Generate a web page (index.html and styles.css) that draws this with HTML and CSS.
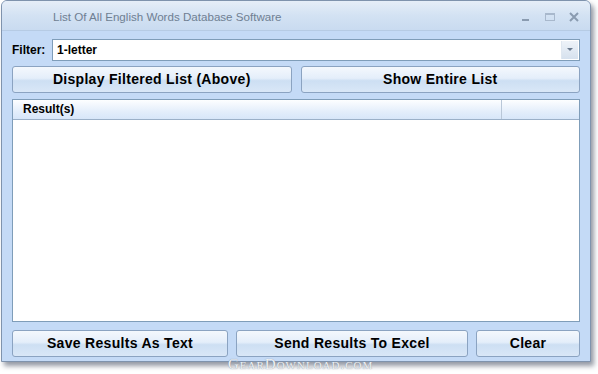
FILE: index.html
```html
<!DOCTYPE html>
<html lang="en">
<head>
    <meta charset="UTF-8">
    <title>List Of All English Words Database Software</title>
    <link rel="stylesheet" href="styles.css">
</head>
<body>
<div class="window">
    <div class="titlebar">
        <span class="title">List Of All English Words Database Software</span>
        <div class="controls">
            <svg width="12" height="10" viewBox="0 0 12 10"><rect x="2" y="7" width="7" height="2" fill="#8a9bb0"/></svg>
            <svg width="12" height="10" viewBox="0 0 12 10"><rect x="1.5" y="1.5" width="9" height="7" fill="none" stroke="#a8b8cc"/><rect x="1" y="1" width="10" height="2" fill="#a8b8cc"/></svg>
            <svg width="12" height="10" viewBox="0 0 12 10"><path d="M2 1 L10 9 M10 1 L2 9" stroke="#8a9bb0" stroke-width="2"/></svg>
        </div>
    </div>

    <div class="content">
        <div class="filter-row">
            <label>Filter:</label>
            <div class="combo">
                <span>1-letter</span>
                <div class="arrow">
                    <svg width="6" height="4" viewBox="0 0 6 4"><path d="M0 0 H6 L3 3 Z" fill="#6b7b8f"/></svg>
                </div>
            </div>
        </div>

        <div class="btn-row top">
            <button class="btn">Display Filtered List (Above)</button>
            <button class="btn">Show Entire List</button>
        </div>

        <div class="list">
            <div class="list-head">
                <div class="col first">Result(s)</div>
                <div class="col"></div>
            </div>
            <div class="list-body"></div>
        </div>

        <div class="btn-row bottom">
            <button class="btn">Save Results As Text</button>
            <button class="btn">Send Results To Excel</button>
            <button class="btn">Clear</button>
        </div>
    </div>

    <div class="watermark">GearDownload.com</div>
</div>
</body>
</html>
```

FILE: styles.css
```css
body {
    margin: 0;
    background: #ffffff;
    font-family: "Liberation Sans", Arial, sans-serif;
    width: 598px;
    height: 374px;
    overflow: hidden;
}

.window {
    position: relative;
    margin-left: 1px;
    width: 588px;
    height: 360px;
    border: 1px solid #7f93ad;
    border-radius: 6px 6px 0 0;
    background: #c4daf6;
    box-shadow: 3px 4px 5px rgba(60, 70, 90, 0.55);
}

.titlebar {
    height: 29px;
    display: flex;
    align-items: center;
    justify-content: space-between;
    padding: 0 10px 0 51px;
    background: linear-gradient(#e6eef8, #d3e2f3 50%, #c9dbf0);
    border-bottom: 1px solid #b6cbe4;
    border-radius: 5px 5px 0 0;
}

.title {
    font-family: "Liberation Sans", Arial, sans-serif;
    font-size: 11.6px;
    color: #6f7f92;
    padding-top: 2px;
}

.controls {
    display: flex;
    gap: 12px;
    padding-top: 2px;
}

.content {
    padding: 8px 10px 5px 10px;
}

.filter-row {
    display: flex;
    align-items: center;
    height: 22px;
}

.filter-row label {
    width: 40px;
    font-size: 12px;
    font-weight: bold;
    color: #000;
}

.combo {
    flex: 1;
    height: 20px;
    display: flex;
    align-items: center;
    justify-content: space-between;
    background: #fff;
    border: 1px solid #7f9db9;
    padding-left: 4px;
    font-size: 12px;
    font-weight: bold;
}

.arrow {
    width: 16px;
    height: 18px;
    margin-right: 1px;
    display: flex;
    align-items: center;
    justify-content: center;
    background: linear-gradient(#eef3f9, #d6e1ee);
    border-left: 1px solid #dfe7f0;
}

.btn-row {
    display: grid;
    gap: 9px;
}

.btn-row.top {
    margin-top: 5px;
    grid-template-columns: 1fr 1fr;
}

.btn-row.bottom {
    margin-top: 8px;
    grid-template-columns: 216px 232px 1fr;
    gap: 8px;
}

.btn {
    height: 27px;
    font-family: "Liberation Sans", Arial, sans-serif;
    font-size: 14px;
    font-weight: bold;
    letter-spacing: 0.3px;
    color: #000;
    border: 1px solid #8ba3c1;
    border-radius: 3px;
    background: linear-gradient(#f4f8fd, #e4eefa 45%, #cddff3 55%, #d9e7f7);
    padding: 0 0 2px 0;
}

.list {
    margin-top: 6px;
    height: 221px;
    border: 1px solid #7f9db9;
    background: #fff;
    display: flex;
    flex-direction: column;
}

.list-head {
    height: 19px;
    display: flex;
    background: linear-gradient(#fdfeff, #e4eefb 60%, #d7e6f9);
    border-bottom: 1px solid #9bb0c8;
}

.col {
    flex: 1;
    font-size: 12px;
    font-weight: bold;
    line-height: 19px;
}

.col.first {
    flex: 0 0 489px;
    padding-left: 10px;
    box-sizing: border-box;
    border-right: 1px solid #b9c7d8;
}

.list-body {
    flex: 1;
}

.watermark {
    position: absolute;
    left: 226px;
    top: 355px;
    font-family: "Liberation Serif", serif;
    font-variant: small-caps;
    font-size: 15px;
    letter-spacing: 1px;
    color: #eef1f4;
    text-shadow: 0 0 1px #7a8594;
}
```
